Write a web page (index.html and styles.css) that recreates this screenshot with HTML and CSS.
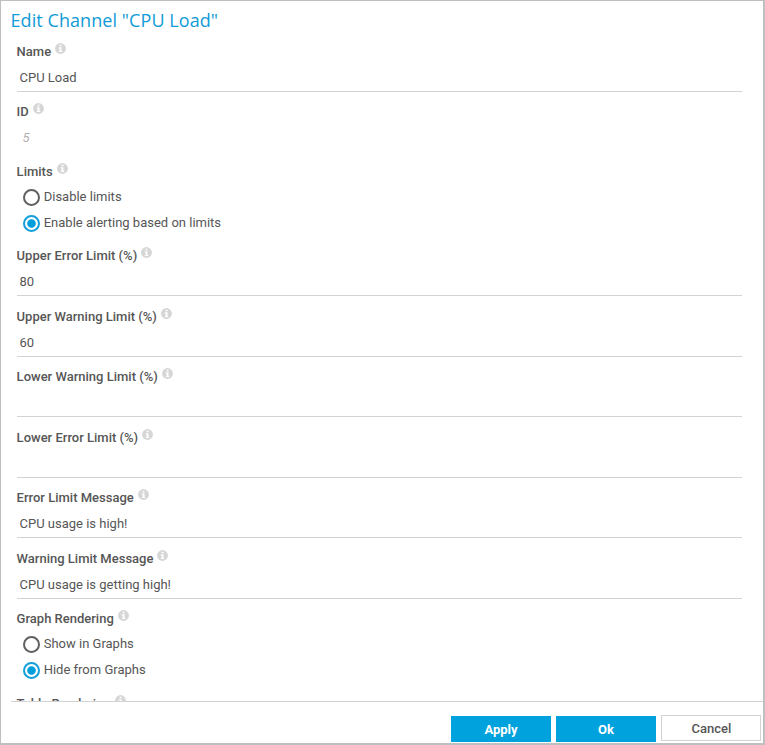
FILE: index.html
```html
<!DOCTYPE html>
<html lang="en">
<head>
<meta charset="utf-8">
<title>Edit Channel</title>
<link rel="stylesheet" href="styles.css">
</head>
<body>
<svg class="defs" width="0" height="0"><symbol id="info" viewBox="0 0 11 11"><circle cx="5.5" cy="5.5" r="5.4" fill="#d6d6d6"/><path d="M4.6 1.7h1.9v1.6H4.6zM3.8 4.3h2.7v3.6h.8v1.1H3.8V7.9h.8V5.4h-.8z" fill="#fff"/></symbol></svg>
<div class="dialog">
  <h1 class="title">Edit Channel "CPU Load"</h1>
  <div class="form">
    <div class="field"><div class="label">Name<svg class="info"><use href="#info"/></svg></div><div class="value">CPU Load</div></div>
    <div class="field id"><div class="label">ID<svg class="info"><use href="#info"/></svg></div><div class="value readonly">5</div></div>
    <div class="group"><div class="label">Limits<svg class="info"><use href="#info"/></svg></div>
      <div class="option"><span class="radio"></span>Disable limits</div>
      <div class="option"><span class="radio checked"></span>Enable alerting based on limits</div></div>
    <div class="field"><div class="label">Upper Error Limit (%)<svg class="info"><use href="#info"/></svg></div><div class="value">80</div></div>
    <div class="field"><div class="label">Upper Warning Limit (%)<svg class="info"><use href="#info"/></svg></div><div class="value">60</div></div>
    <div class="field"><div class="label">Lower Warning Limit (%)<svg class="info"><use href="#info"/></svg></div><div class="value"></div></div>
    <div class="field"><div class="label">Lower Error Limit (%)<svg class="info"><use href="#info"/></svg></div><div class="value"></div></div>
    <div class="field"><div class="label">Error Limit Message<svg class="info"><use href="#info"/></svg></div><div class="value">CPU usage is high!</div></div>
    <div class="field"><div class="label">Warning Limit Message<svg class="info"><use href="#info"/></svg></div><div class="value">CPU usage is getting high!</div></div>
    <div class="group"><div class="label">Graph Rendering<svg class="info"><use href="#info"/></svg></div>
      <div class="option"><span class="radio"></span>Show in Graphs</div>
      <div class="option"><span class="radio checked"></span>Hide from Graphs</div></div>
    <div class="group last"><div class="label">Table Rendering<svg class="info"><use href="#info"/></svg></div></div>
  </div>
  <div class="footer">
    <div class="button primary">Apply</div>
    <div class="button primary">Ok</div>
    <div class="button cancel">Cancel</div>
  </div>
</div>
</body>
</html>
```
FILE: styles.css
```css
* { box-sizing: border-box; }
body { margin: 0; background: #fff; font: 13px/20px Roboto, sans-serif; color: #565656; overflow: hidden; }
.defs { display: block; }
.dialog { width: 765px; height: 745px; border: solid #bfbfbf; border-width: 1px 2px 2px 1px; display: flex; flex-direction: column; }
.title { margin: 0; padding: 4px 0 0 9.5px; height: 40px; flex: none; font: 400 18px/30px "Open Sans", sans-serif; letter-spacing: 0.07px; color: #0f9bd7; }
.form { height: 660px; flex: none; padding: 0 21px 0 16px; overflow: hidden; }
.field { height: 51px; margin-bottom: 9.5px; }
.id { margin-bottom: 9px; }
.field:first-child { margin-bottom: 9px; }
.label { display: flex; height: 20px; font-weight: 500; line-height: 21px; white-space: nowrap; margin-left: -0.4px; }
.info { width: 11px; height: 11px; margin: 2px 0 0 4px; flex: none; }
.value { height: 31px; line-height: 34px; padding-left: 2.5px; border-bottom: 1px solid #d3d3d3; }
.readonly { padding-left: 5.5px; border-color: transparent; color: #b0b0b0; font-style: italic; }
.group { height: 84px; }
.group .label { margin-bottom: 3px; }
.last .label { line-height: 23px; }
.last .info { margin-top: 3px; }
.option { height: 26px; display: flex; align-items: center; padding-left: 6px; }
.radio { width: 17px; height: 17px; margin: 1px 3.7px 0 0; border: 2px solid #606060; border-radius: 50%; }
.checked { border-color: #139fda; background: radial-gradient(circle, #009fdc 3.8px, #fff 4.7px); }
.footer { margin-left: 10px; border-top: 1px solid #d3d3d3; height: 42px; padding: 13px 2px 0 0; display: flex; justify-content: flex-end; gap: 5px; }
.button { width: 100px; height: 26px; line-height: 27px; text-align: center; font-weight: 500; }
.primary { margin-top: 1px; background: #00a2dd; color: #fff; font-weight: 700; }
.cancel { border: 1px solid #d3d3d3; line-height: 25px; padding-left: 1px; }
```
